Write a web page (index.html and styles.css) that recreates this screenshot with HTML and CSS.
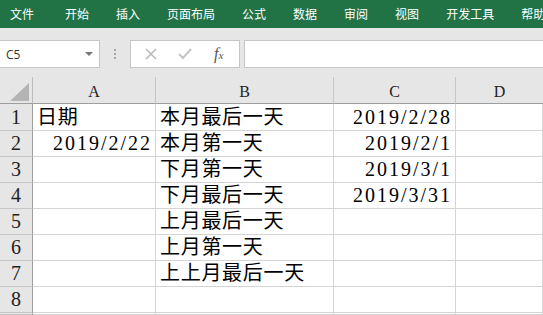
FILE: index.html
```html
<!DOCTYPE html>
<html lang="zh-CN">
<head>
    <meta charset="UTF-8">
    <title>日期计算</title>
    <link rel="stylesheet" href="styles.css">
</head>
<body>
    <div class="ribbon">
        <span class="tab first">文件</span>
        <span class="tab">开始</span>
        <span class="tab">插入</span>
        <span class="tab">页面布局</span>
        <span class="tab">公式</span>
        <span class="tab">数据</span>
        <span class="tab">审阅</span>
        <span class="tab">视图</span>
        <span class="tab">开发工具</span>
        <span class="tab">帮助</span>
    </div>

    <div class="toolbar">
        <div class="name-box">
            <span>C5</span>
            <span class="caret"></span>
        </div>
        <div class="grip"><i></i><i></i><i></i></div>
        <div class="buttons">
            <svg width="14" height="14" viewBox="0 0 14 14" class="btn-x">
                <path d="M2 2 L12 12 M12 2 L2 12" stroke="#b9b9b9" stroke-width="1.6" fill="none"/>
            </svg>
            <svg width="16" height="14" viewBox="0 0 16 14" class="btn-ok">
                <path d="M2 7 L6 11 L14 2" stroke="#c4c4c4" stroke-width="2" fill="none"/>
            </svg>
            <span class="fx">f<sub>x</sub></span>
        </div>
        <div class="formula"></div>
    </div>

    <div class="sheet">
        <div class="corner"><span class="tri"></span></div>
        <div class="col-head">A</div>
        <div class="col-head">B</div>
        <div class="col-head">C</div>
        <div class="col-head last">D</div>

        <div class="row-head">1</div>
        <div class="cell">日期</div>
        <div class="cell">本月最后一天</div>
        <div class="cell num">2019/2/28</div>
        <div class="cell"></div>

        <div class="row-head">2</div>
        <div class="cell num">2019/2/22</div>
        <div class="cell">本月第一天</div>
        <div class="cell num">2019/2/1</div>
        <div class="cell"></div>

        <div class="row-head">3</div>
        <div class="cell"></div>
        <div class="cell">下月第一天</div>
        <div class="cell num">2019/3/1</div>
        <div class="cell"></div>

        <div class="row-head">4</div>
        <div class="cell"></div>
        <div class="cell">下月最后一天</div>
        <div class="cell num">2019/3/31</div>
        <div class="cell"></div>

        <div class="row-head">5</div>
        <div class="cell"></div>
        <div class="cell">上月最后一天</div>
        <div class="cell"></div>
        <div class="cell"></div>

        <div class="row-head">6</div>
        <div class="cell"></div>
        <div class="cell">上月第一天</div>
        <div class="cell"></div>
        <div class="cell"></div>

        <div class="row-head">7</div>
        <div class="cell"></div>
        <div class="cell">上上月最后一天</div>
        <div class="cell"></div>
        <div class="cell"></div>

        <div class="row-head">8</div>
        <div class="cell"></div>
        <div class="cell"></div>
        <div class="cell"></div>
        <div class="cell"></div>

        <div class="row-head"></div>
        <div class="cell"></div>
        <div class="cell"></div>
        <div class="cell"></div>
        <div class="cell"></div>
    </div>
</body>
</html>
```

FILE: styles.css
```css
body {
    margin: 0;
    width: 543px;
    height: 315px;
    overflow: hidden;
    background-color: #e6e6e6;
    font-family: 'Noto Sans CJK SC', sans-serif;
}
.ribbon {
    height: 28px;
    background-color: #217346;
    display: flex;
    align-items: center;
    gap: 27px;
    padding-left: 10px;
    white-space: nowrap;
    overflow: hidden;
}
.tab {
    color: #fff;
    font-size: 12px;
    line-height: 28px;
}
.tab.first {
    margin-right: 4px;
}
.toolbar {
    display: flex;
    align-items: center;
    height: 28px;
    padding: 12px 0 9px 0;
}
.name-box {
    box-sizing: border-box;
    width: 101px;
    height: 28px;
    margin-left: -1px;
    background-color: #fff;
    border: 1px solid #c6c6c6;
    display: flex;
    align-items: center;
    justify-content: space-between;
    padding: 0 6px 0 6px;
    font-family: 'Open Sans', 'Liberation Sans', sans-serif;
    font-size: 12px;
    color: #333;
}
.caret {
    width: 0;
    height: 0;
    border-left: 4px solid transparent;
    border-right: 4px solid transparent;
    border-top: 4px solid #777;
}
.grip {
    width: 30px;
    display: flex;
    flex-direction: column;
    align-items: center;
    gap: 2px;
}
.grip i {
    display: block;
    width: 2px;
    height: 2px;
    background-color: #a6a6a6;
}
.buttons {
    box-sizing: border-box;
    width: 110px;
    height: 28px;
    background-color: #fff;
    border: 1px solid #c6c6c6;
    display: flex;
    align-items: center;
    padding-left: 13px;
}
.btn-x {
    margin-right: 19px;
}
.btn-ok {
    margin-right: 21px;
}
.fx {
    font-family: 'Liberation Serif', serif;
    font-style: italic;
    font-size: 16px;
    color: #555;
}
.fx sub {
    font-size: 11px;
    vertical-align: 0;
}
.formula {
    box-sizing: border-box;
    flex: 1;
    height: 28px;
    margin-left: 4px;
    margin-right: -1px;
    background-color: #fff;
    border: 1px solid #c6c6c6;
}
.sheet {
    display: grid;
    grid-template-columns: 33px 123px 178px 122px 1fr;
    grid-template-rows: 27px 27px repeat(7, 26px) 2px;
    background-color: #fff;
    font-family: 'Liberation Serif', 'Noto Sans CJK SC', serif;
    font-size: 20px;
    color: #000;
}
.corner {
    position: relative;
    background-color: #e6e6e6;
    border-right: 1px solid #bcbcbc;
    border-bottom: 1px solid #9e9e9e;
}
.tri {
    position: absolute;
    right: 3px;
    bottom: 2px;
    width: 0;
    height: 0;
    border-left: 19px solid transparent;
    border-bottom: 18px solid #b4b4b4;
}
.col-head {
    background-color: #e6e6e6;
    border-right: 1px solid #c6c6c6;
    border-bottom: 1px solid #9e9e9e;
    display: flex;
    align-items: flex-end;
    justify-content: center;
    font-size: 16px;
    line-height: 16px;
    padding-bottom: 3px;
    box-sizing: border-box;
    color: #222;
}
.col-head.last {
    border-right: none;
}
.row-head {
    background-color: #e6e6e6;
    border-right: 1px solid #9e9e9e;
    border-bottom: 1px solid #c6c6c6;
    text-align: center;
    line-height: 25px;
    color: #222;
}
.cell {
    border-right: 1px solid #d4d4d4;
    border-bottom: 1px solid #d4d4d4;
    padding: 0 4px;
    line-height: 25px;
    letter-spacing: 0.7px;
    white-space: nowrap;
    overflow: hidden;
}
.row-head:nth-child(6),
.row-head:nth-child(6) ~ .cell:nth-child(-n+10) {
    line-height: 26px;
}
.num {
    text-align: right;
    letter-spacing: 2px;
    padding-right: 3px;
}
```
